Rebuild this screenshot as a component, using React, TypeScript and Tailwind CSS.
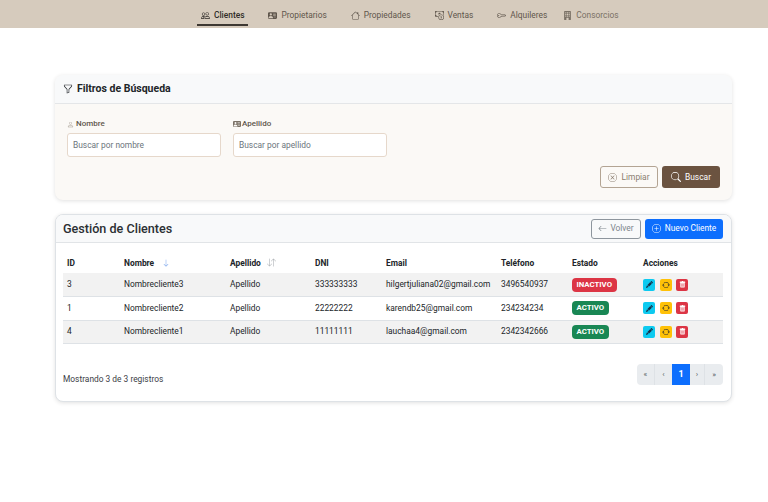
import React from "react";
import { BsPeople, BsPersonVcardFill, BsHouse, BsCashCoin, BsKey, BsBuildingFill, BsFunnel, BsPerson, BsXCircle, BsSearch, BsArrowLeft, BsPlusCircle, BsArrowDown, BsArrowDownUp, BsPencilFill, BsArrowRepeat, BsTrashFill } from "react-icons/bs";

const nav = [
  { label: "Clientes", icon: BsPeople, active: true, cls: "text-[#2f2b27]" },
  { label: "Propietarios", icon: BsPersonVcardFill, cls: "text-[#5f564c]" },
  { label: "Propiedades", icon: BsHouse, cls: "text-[#5f564c]" },
  { label: "Ventas", icon: BsCashCoin, cls: "text-[#5f564c]" },
  { label: "Alquileres", icon: BsKey, cls: "text-[#5f564c]" },
  { label: "Consorcios", icon: BsBuildingFill, cls: "text-[#7a7166] ml-[-8px]" },
];

const rows = [
  { id: "3", n: "Nombrecliente3", a: "Apellido", d: "333333333", e: "hilgertjuliana02@gmail.com", t: "3496540937", s: "INACTIVO", striped: true },
  { id: "1", n: "Nombrecliente2", a: "Apellido", d: "22222222", e: "karendb25@gmail.com", t: "234234234", s: "ACTIVO", striped: false },
  { id: "4", n: "Nombrecliente1", a: "Apellido", d: "11111111", e: "lauchaa4@gmail.com", t: "2342342666", s: "ACTIVO", striped: true },
];

export default function App() {
  return (
    <div className="min-h-[502px] bg-white text-[#212529] font-['Roboto','Open_Sans',sans-serif] text-[8.4px]">
      <nav className="h-[28px] bg-[#d6cbbd] flex justify-start pl-[197px]">
        <div className="flex gap-[16px]">
          {nav.map((n) => (
            <div key={n.label} className={`h-[26px] pt-[6px] flex items-center gap-[4px] px-[4px] border-b-2 ${n.active ? "border-[#3d3832] font-medium" : "border-transparent"} ${n.cls}`}>
              <n.icon size={9} />
              <span>{n.label}</span>
            </div>
          ))}
        </div>
      </nav>

      <main className="px-[55px] w-[787px] pt-[47px] flex flex-col gap-[14px]">
        <section className="w-[677px] h-[125px] rounded-[8px] bg-[#fbf9f6] shadow-[0_1px_4px_rgba(0,0,0,0.12)] overflow-hidden">
          <header className="h-[29px] bg-[#f8f9fa] border-b border-[#e4e6e8] flex items-center gap-[4px] px-[8px]">
            <BsFunnel size={10} className="text-[#212529]" />
            <h2 className="font-bold text-[10.5px] leading-none">Filtros de Búsqueda</h2>
          </header>
          <div className="px-[12px] pt-[15px]">
            <div className="flex gap-[12px]">
              <div className="w-[154px]">
                <label className="flex items-center gap-[2px] h-[10px] text-[8px] font-medium text-[#5f564c]">
                  <BsPerson size={7} className="text-[#a39a8f]" />Nombre
                </label>
                <div className="mt-[4px] h-[24px] bg-white border border-[#e6d8cb] rounded-[3px] flex items-center px-[5px] pt-[1px] text-[8.4px] text-[#6c757d]">Buscar por nombre</div>
              </div>
              <div className="w-[154px]">
                <label className="flex items-center gap-[1px] h-[10px] text-[8px] font-medium text-[#5f564c]">
                  <BsPersonVcardFill size={8} className="text-[#7a7166]" />Apellido
                </label>
                <div className="mt-[4px] h-[24px] bg-white border border-[#e6d8cb] rounded-[3px] flex items-center px-[5px] pt-[1px] text-[8.4px] text-[#6c757d]">Buscar por apellido</div>
              </div>
            </div>
            <div className="flex justify-end gap-[4px] mt-[9px]">
              <button className="w-[58px] h-[22px] rounded-[3px] border border-[#b3a493] text-[#8b7e70] flex items-center justify-center gap-[4px]">
                <BsXCircle size={9} />Limpiar
              </button>
              <button className="w-[58px] h-[22px] rounded-[3px] bg-[#6b5340] text-white flex items-center justify-center gap-[4px]">
                <BsSearch size={10} />Buscar
              </button>
            </div>
          </div>
        </section>

        <section className="w-[677px] h-[188px] rounded-[8px] bg-white border border-[#dee2e6] shadow-[0_1px_4px_rgba(0,0,0,0.12)] overflow-hidden">
          <header className="h-[28px] bg-[#f8f9fa] border-b border-[#e1e4e7] flex items-center justify-between pl-[7px] pr-[8px]">
            <h2 className="text-[12.6px] font-medium leading-none text-[#2b2f33] pt-[1px]">Gestión de Clientes</h2>
            <div className="flex gap-[4px]">
              <button className="w-[50px] h-[20px] rounded-[3px] border border-[#8d959d] text-[#7d858c] flex items-center justify-center gap-[3px]">
                <BsArrowLeft size={9} />Volver
              </button>
              <button className="w-[78px] h-[20px] rounded-[3px] bg-[#0d6efd] text-white flex items-center justify-center gap-[4px]">
                <BsPlusCircle size={9} />Nuevo Cliente
              </button>
            </div>
          </header>
          <div className="pl-[7px] pr-[8px] pt-[7px]">
            <table className="w-[660px] table-fixed border-collapse">
              <colgroup>
                <col className="w-[57px]" /><col className="w-[106px]" /><col className="w-[85px]" /><col className="w-[71px]" /><col className="w-[115px]" /><col className="w-[71px]" /><col className="w-[71px]" /><col className="w-[84px]" />
              </colgroup>
              <thead>
                <tr className="h-[23px] text-left font-bold">
                  <th className="pl-[4px] pt-[3px]">ID</th>
                  <th className="pl-[4px] pt-[3px]"><span className="flex items-center gap-[8px]">Nombre<BsArrowDown size={8} className="text-[#7ba6ec]" /></span></th>
                  <th className="pl-[4px] pt-[3px]"><span className="flex items-center gap-[6px]">Apellido<BsArrowDownUp size={9} className="text-[#a9adb1]" /></span></th>
                  <th className="pl-[4px] pt-[3px]">DNI</th>
                  <th className="pl-[4px] pt-[3px]">Email</th>
                  <th className="pl-[4px] pt-[3px]">Teléfono</th>
                  <th className="pl-[4px] pt-[3px]">Estado</th>
                  <th className="pl-[4px] pt-[3px]">Acciones</th>
                </tr>
              </thead>
              <tbody>
                {rows.map((r) => (
                  <tr key={r.id} className={`h-[23.5px] border-b border-[#dee2e6] ${r.striped ? "bg-[#f2f2f2]" : "bg-white"}`}>
                    <td className="pl-[4px]">{r.id}</td>
                    <td className="pl-[4px]">{r.n}</td>
                    <td className="pl-[4px]">{r.a}</td>
                    <td className="pl-[4px]">{r.d}</td>
                    <td className="pl-[4px] whitespace-nowrap">{r.e}</td>
                    <td className="pl-[4px]">{r.t}</td>
                    <td className="pl-[4px]">
                      <span className={`flex w-fit items-center h-[14px] px-[4.5px] rounded-[4px] text-white font-bold text-[7.8px] ${r.s === "ACTIVO" ? "bg-[#198754]" : "bg-[#dc3545]"}`}>{r.s}</span>
                    </td>
                    <td className="pl-[4px]">
                      <div className="flex gap-[4.5px]">
                        <span className="w-[12px] h-[12px] rounded-[2px] bg-[#0dcaf0] flex items-center justify-center text-[#16324a]"><BsPencilFill size={7} /></span>
                        <span className="w-[12px] h-[12px] rounded-[2px] bg-[#ffc107] flex items-center justify-center text-[#2b2b2b]"><BsArrowRepeat size={8} /></span>
                        <span className="w-[12px] h-[12px] rounded-[2px] bg-[#dc3545] flex items-center justify-center text-white"><BsTrashFill size={7} /></span>
                      </div>
                    </td>
                  </tr>
                ))}
              </tbody>
            </table>
            <div className="flex items-end justify-between mt-[20px]">
              <span className="text-[#3b4046] leading-none mb-[2px]">Mostrando 3 de 3 registros</span>
              <div className="flex h-[21px] rounded-[4px] overflow-hidden bg-[#e9ecef] text-[#5c636a] text-[8px]">
                <span className="w-[18px] flex items-center justify-center border-r border-[#dee2e6]">«</span>
                <span className="w-[17px] flex items-center justify-center">‹</span>
                <span className="w-[18px] flex items-center justify-center bg-[#0d6efd] text-white font-bold text-[9px]">1</span>
                <span className="w-[15px] flex items-center justify-center border-r border-[#dee2e6]">›</span>
                <span className="w-[18px] flex items-center justify-center">»</span>
              </div>
            </div>
          </div>
        </section>
      </main>
    </div>
  );
}
